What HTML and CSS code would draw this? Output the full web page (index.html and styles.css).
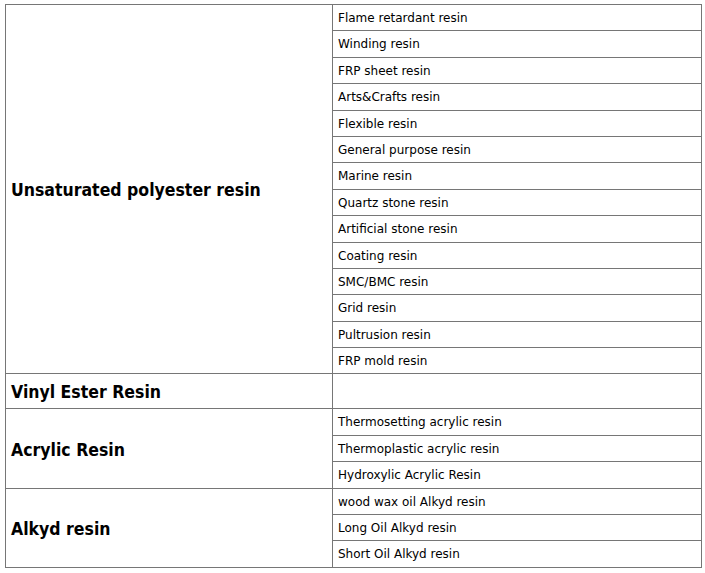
FILE: index.html
```html
<!DOCTYPE html>
<html>
<head>
<meta charset="utf-8">
<link rel="stylesheet" href="styles.css">
</head>
<body>
<table class="resin-table">
  <tbody>
    <tr>
      <td class="cat" rowspan="14">Unsaturated polyester resin</td>
      <td class="item">Flame retardant resin</td>
    </tr>
    <tr><td class="item">Winding resin</td></tr>
    <tr><td class="item">FRP sheet resin</td></tr>
    <tr><td class="item">Arts&amp;Crafts resin</td></tr>
    <tr><td class="item">Flexible resin</td></tr>
    <tr><td class="item">General purpose resin</td></tr>
    <tr><td class="item">Marine resin</td></tr>
    <tr><td class="item">Quartz stone resin</td></tr>
    <tr><td class="item">Artificial stone resin</td></tr>
    <tr><td class="item">Coating resin</td></tr>
    <tr><td class="item">SMC/BMC resin</td></tr>
    <tr><td class="item">Grid resin</td></tr>
    <tr><td class="item">Pultrusion resin</td></tr>
    <tr><td class="item">FRP mold resin</td></tr>
    <tr>
      <td class="cat cat-single">Vinyl Ester Resin</td>
      <td class="item"></td>
    </tr>
    <tr>
      <td class="cat" rowspan="3">Acrylic Resin</td>
      <td class="item">Thermosetting acrylic resin</td>
    </tr>
    <tr><td class="item">Thermoplastic acrylic resin</td></tr>
    <tr><td class="item">Hydroxylic Acrylic Resin</td></tr>
    <tr>
      <td class="cat" rowspan="3">Alkyd resin</td>
      <td class="item">wood wax oil Alkyd resin</td>
    </tr>
    <tr><td class="item">Long Oil Alkyd resin</td></tr>
    <tr><td class="item">Short Oil Alkyd resin</td></tr>
  </tbody>
</table>
</body>
</html>
```
FILE: styles.css
```css
html, body {
  margin: 0;
  padding: 0;
  background: #ffffff;
}
body {
  padding: 4px 0 0 5px;
  font-family: "DejaVu Sans", Verdana, sans-serif;
  color: #000000;
}
.resin-table {
  border-collapse: collapse;
  width: 697px;
  table-layout: fixed;
}
.resin-table td {
  border: 1px solid #767676;
  padding: 0 5px;
  vertical-align: middle;
}
.resin-table .cat {
  width: 316px;
  font-family: "DejaVu Sans Condensed", "DejaVu Sans", Verdana, sans-serif;
  font-weight: bold;
  font-size: 17.5px;
  line-height: 24px;
  padding-top: 2px;
}
.resin-table .cat-single {
  height: 32px;
}
.resin-table .item {
  font-size: 12px;
  height: 15.4px;
  line-height: 15px;
  padding-top: 6px;
  padding-bottom: 4px;
  vertical-align: top;
}
```
